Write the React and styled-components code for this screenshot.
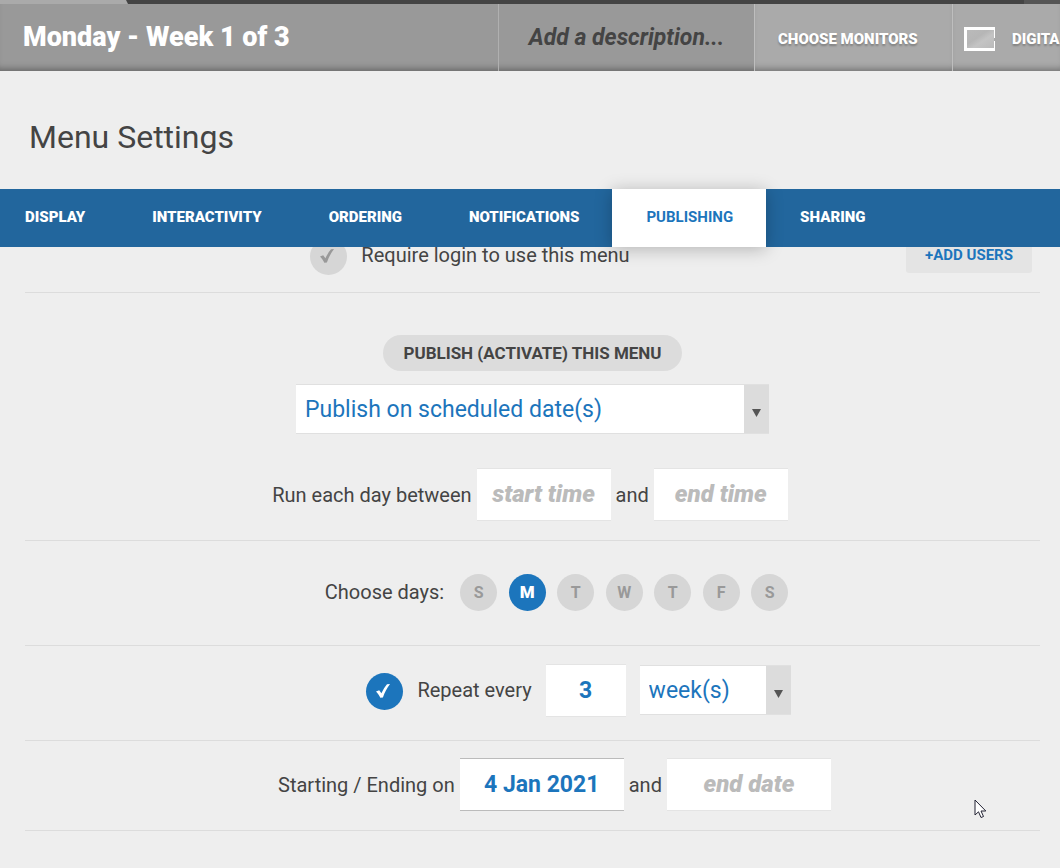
import React, { useState } from "react";
import styled, { createGlobalStyle, css } from "styled-components";

const blue = "#1c75bc";
const ink = "#444";

const GlobalStyle = createGlobalStyle`
  * { box-sizing: border-box; }
  body {
    margin: 0;
    background: #eee;
    color: ${ink};
    font-family: Roboto, "Liberation Sans", sans-serif;
    font-size: 20px;
    overflow-x: hidden;
  }
  button, input, select { font-family: inherit; margin: 0; }
`;

const Page = styled.div`
  min-height: 100vh;
  overflow: hidden;
`;

const BrowserStrip = styled.div`
  display: flex;
  justify-content: space-between;
  height: 4px;
  background: #444;
`;

const StripTab = styled.div`
  width: 128px;
  background: #aaa;
  clip-path: polygon(0 0, 126px 0, 100% 100%, 0 100%);
`;

const StripEnd = styled.div`
  width: 36px;
  background: #555;
`;

const Header = styled.header`
  display: flex;
  height: 67px;
  background: #999;
  box-shadow: inset 0 -7px 7px -5px rgba(0, 0, 0, 0.35);
`;

const MenuName = styled.h1`
  flex: 1;
  margin: 0;
  padding-left: 23px;
  color: #fff;
  font-size: 27px;
  font-weight: 900;
  line-height: 67px;
  white-space: nowrap;
`;

const Description = styled.input`
  width: 256px;
  padding: 0;
  border: 0;
  border-left: 1px solid #b0b0b0;
  background: transparent;
  text-align: center;
  font-size: 23px;
  font-weight: 700;
  font-style: italic;
  &::placeholder { color: ${ink}; opacity: 1; }
`;

const HeaderButton = styled.button`
  display: flex;
  align-items: center;
  gap: 16px;
  width: ${(p) => (p.$clipped ? 108 : 198)}px;
  padding: 2px 0 0 ${(p) => (p.$clipped ? 10 : 23)}px;
  overflow: hidden;
  border: 0;
  border-left: 1px solid #bebebe;
  background: #aaa;
  box-shadow: inset 0 -7px 7px -5px rgba(0, 0, 0, 0.35);
  color: #fff;
  font-size: 15px;
  font-weight: 900;
  white-space: nowrap;
  text-shadow: 0 2px 2px rgba(0, 0, 0, 0.25);
  svg { flex: none; }
`;

const Title = styled.h2`
  margin: 0;
  padding: 45px 29px 0;
  height: 118px;
  font-size: 32px;
  font-weight: 400;
  line-height: 42px;
`;

const Tabs = styled.nav`
  position: relative;
  z-index: 1;
  display: flex;
  height: 58px;
  background: #22669d;
`;

const Tab = styled.button`
  padding: 0 33px 3px 34px;
  border: 0;
  background: transparent;
  color: #fff;
  font-size: 15px;
  font-weight: 900;
  &:first-child { padding-left: 25px; }
  ${(p) =>
    p.$active &&
    css`
      background: #fff;
      color: ${blue};
      font-weight: 700;
      box-shadow: 0 2px 16px rgba(0, 0, 0, 0.25);
    `}
`;

/* The list is scrolled a little way under the tab bar. */
const Panel = styled.main`
  margin: -28px 20px 0 25px;
`;

const Row = styled.section`
  display: flex;
  align-items: center;
  justify-content: center;
  height: ${(p) => p.$height}px;
  padding: 0 0 ${(p) => p.$foot || 2}px ${(p) => p.$lead || 0}px;
  gap: ${(p) => p.$gap || 5}px;
  border-bottom: 1px solid #dcdcdc;
  white-space: nowrap;
`;

const PublishRow = styled.section`
  display: flex;
  flex-direction: column;
  align-items: center;
  padding: 42px 0 19px;
  border-bottom: 1px solid #dcdcdc;
`;

const Pill = styled.label`
  margin-bottom: 13px;
  padding: 0 20px;
  border-radius: 18px;
  background: #dcdcdc;
  font-size: 17px;
  font-weight: 700;
  line-height: 36px;
`;

const Times = styled.div`
  display: flex;
  align-items: center;
  gap: 5px;
  margin-top: 34px;
  padding-right: 5px;
  white-space: nowrap;
`;

const LoginOption = styled.div`
  flex: 1;
  display: flex;
  align-items: center;
  justify-content: center;
  gap: 14px;
  padding-left: 14px;
`;

const AddUsers = styled.button`
  width: 126px;
  height: 36px;
  margin-right: 8px;
  padding: 0;
  border: 0;
  border-radius: 3px;
  background: #e4e4e4;
  color: ${blue};
  font-size: 15px;
  font-weight: 700;
`;

const Label = styled.label`
  line-height: 24px;
`;

const Field = styled.input`
  width: ${(p) => p.$width}px;
  height: 53px;
  padding: 0;
  border: 1px solid #e4e4e4;
  border-width: 1px 0;
  border-color: ${(p) => (p.$edited ? "#bbb" : "#e4e4e4")};
  background: #fff;
  color: ${blue};
  text-align: center;
  font-size: 23px;
  font-weight: 700;
  &::placeholder {
    color: #bbb;
    opacity: 1;
    font-size: 24px;
    font-weight: 900;
    font-style: italic;
  }
`;

const SelectWrap = styled.div`
  position: relative;
  width: ${(p) => p.$width}px;
  max-width: 100%;
  svg {
    position: absolute;
    right: 7px;
    top: 24px;
    pointer-events: none;
  }
`;

const SelectBox = styled.select`
  display: block;
  appearance: none;
  width: 100%;
  height: 50px;
  padding: 0 30px 0 9px;
  border: 1px solid #e0e0e0;
  border-width: 1px 0;
  border-radius: 0;
  background: linear-gradient(#dcdcdc, #dcdcdc) right / 25px 100% no-repeat #fff;
  color: ${blue};
  font-size: 23px;
`;

const Days = styled.div`
  display: flex;
  justify-content: space-between;
  width: 328px;
`;

const Day = styled.button`
  width: 37px;
  height: 37px;
  padding: 0;
  border: 0;
  border-radius: 50%;
  background: ${(p) => (p.$on ? blue : "#d6d6d6")};
  color: ${(p) => (p.$on ? "#fff" : "#999")};
  font-size: ${(p) => (p.$on ? 17 : 16)}px;
  font-weight: ${(p) => (p.$on ? 900 : 700)};
`;

const CheckWrap = styled.span`
  position: relative;
  display: block;
  width: 37px;
  height: 37px;
  margin-top: 3px;
  svg {
    position: absolute;
    left: 9px;
    top: 9px;
    pointer-events: none;
    color: #999;
  }
  input:checked + svg { color: #fff; }
`;

const CheckInput = styled.input`
  display: block;
  appearance: none;
  width: 37px;
  height: 37px;
  border-radius: 50%;
  background: #d6d6d6;
  &:checked { background: ${blue}; }
`;

const Pointer = styled.svg`
  position: absolute;
  left: 974px;
  top: 799px;
  pointer-events: none;
`;

function Check({ id, on }) {
  const [checked, setChecked] = useState(on);
  return (
    <CheckWrap>
      <CheckInput id={id} type="checkbox" checked={checked} onChange={() => setChecked(!checked)} />
      <svg width="18" height="18" viewBox="0 0 18 18" aria-hidden="true">
        <path d="M1 9.600 4.200 8.200 6.400 11.200C8.200 7.600 9.900 4.600 12 2.200L15 2C11.800 6.200 9.700 10.500 7.900 15.400L5.300 15.800C4.200 13.400 2.900 11.500 1 9.600Z" fill="currentColor" />
      </svg>
    </CheckWrap>
  );
}

function Select({ id, width, label, options }) {
  return (
    <SelectWrap $width={width}>
      <SelectBox id={id} aria-label={label}>
        {options.map((o) => (
          <option key={o}>{o}</option>
        ))}
      </SelectBox>
      <svg width="11" height="10" viewBox="0 0 11 10" aria-hidden="true">
        <path d="M1 1H10L5.500 9Z" fill="#555" />
      </svg>
    </SelectWrap>
  );
}

const tabs = ["DISPLAY", "INTERACTIVITY", "ORDERING", "NOTIFICATIONS", "PUBLISHING", "SHARING"];

export default function App() {
  const [tab, setTab] = useState("PUBLISHING");
  const [days, setDays] = useState([1]);
  const toggleDay = (i) =>
    setDays(days.includes(i) ? days.filter((d) => d !== i) : [...days, i]);

  return (
    <Page>
      <GlobalStyle />
      <BrowserStrip>
        <StripTab />
        <StripEnd />
      </BrowserStrip>
      <Header>
        <MenuName>Monday - Week 1 of 3</MenuName>
        <Description aria-label="Description" placeholder="Add a description..." />
        <HeaderButton>CHOOSE MONITORS</HeaderButton>
        <HeaderButton $clipped>
          <svg width="33" height="26" viewBox="0 0 33 26" aria-hidden="true">
            <defs>
              <linearGradient id="screen" x1="0" y1="0" x2="1" y2="1">
                <stop offset="0" stopColor="#bababa" />
                <stop offset="0.4" stopColor="#b6b6b6" />
                <stop offset="0.6" stopColor="#c4c4c4" />
                <stop offset="1" stopColor="#bababa" />
              </linearGradient>
            </defs>
            <path d="M1 1H32V25H1Z" fill="#fff" />
            <path d="M4 4H31V22H4Z" fill="url(#screen)" />
            <path d="M31 12H32V15H31Z" fill="#aaa" />
          </svg>
          DIGITA
        </HeaderButton>
      </Header>
      <Title>Menu Settings</Title>
      <Tabs>
        {tabs.map((t) => (
          <Tab key={t} $active={t === tab} onClick={() => setTab(t)}>
            {t}
          </Tab>
        ))}
      </Tabs>
      <Panel>
        <Row $height={74}>
          <LoginOption>
            <Check id="login" on={false} />
            <Label htmlFor="login">Require login to use this menu</Label>
          </LoginOption>
          <AddUsers>+ADD USERS</AddUsers>
        </Row>
        <PublishRow>
          <Pill htmlFor="publish">PUBLISH (ACTIVATE) THIS MENU</Pill>
          <Select id="publish" width={473} options={["Publish on scheduled date(s)"]} />
          <Times>
            <Label htmlFor="start-time">Run each day between</Label>
            <Field id="start-time" $width={134} placeholder="start time" />
            <Label htmlFor="end-time">and</Label>
            <Field id="end-time" $width={134} placeholder="end time" />
          </Times>
        </PublishRow>
        <Row $height={105} $lead={48} $gap={16}>
          <span>Choose days:</span>
          <Days>
            {[..."SMTWTFS"].map((d, i) => (
              <Day key={i} $on={days.includes(i)} aria-pressed={days.includes(i)} onClick={() => toggleDay(i)}>
                {d}
              </Day>
            ))}
          </Days>
        </Row>
        <Row $height={95} $lead={92} $foot={6} $gap={14}>
          <Check id="repeat" on />
          <Label htmlFor="repeat">Repeat every</Label>
          <Field aria-label="Repeat count" $width={80} defaultValue="3" />
          <Select width={151} label="Repeat unit" options={["week(s)"]} />
        </Row>
        <Row $height={90} $lead={44}>
          <Label htmlFor="start-date">Starting / Ending on</Label>
          <Field id="start-date" $width={164} $edited defaultValue="4 Jan 2021" />
          <Label htmlFor="end-date">and</Label>
          <Field id="end-date" $width={164} placeholder="end date" />
        </Row>
      </Panel>
      <Pointer width="13" height="20" viewBox="0 0 13 20" aria-hidden="true">
        <path d="M1 1V16L4.500 12.800L7 18.500L9.500 17.500L7 12H11.800Z" fill="#fff" stroke="#223" strokeWidth="1" />
      </Pointer>
    </Page>
  );
}
